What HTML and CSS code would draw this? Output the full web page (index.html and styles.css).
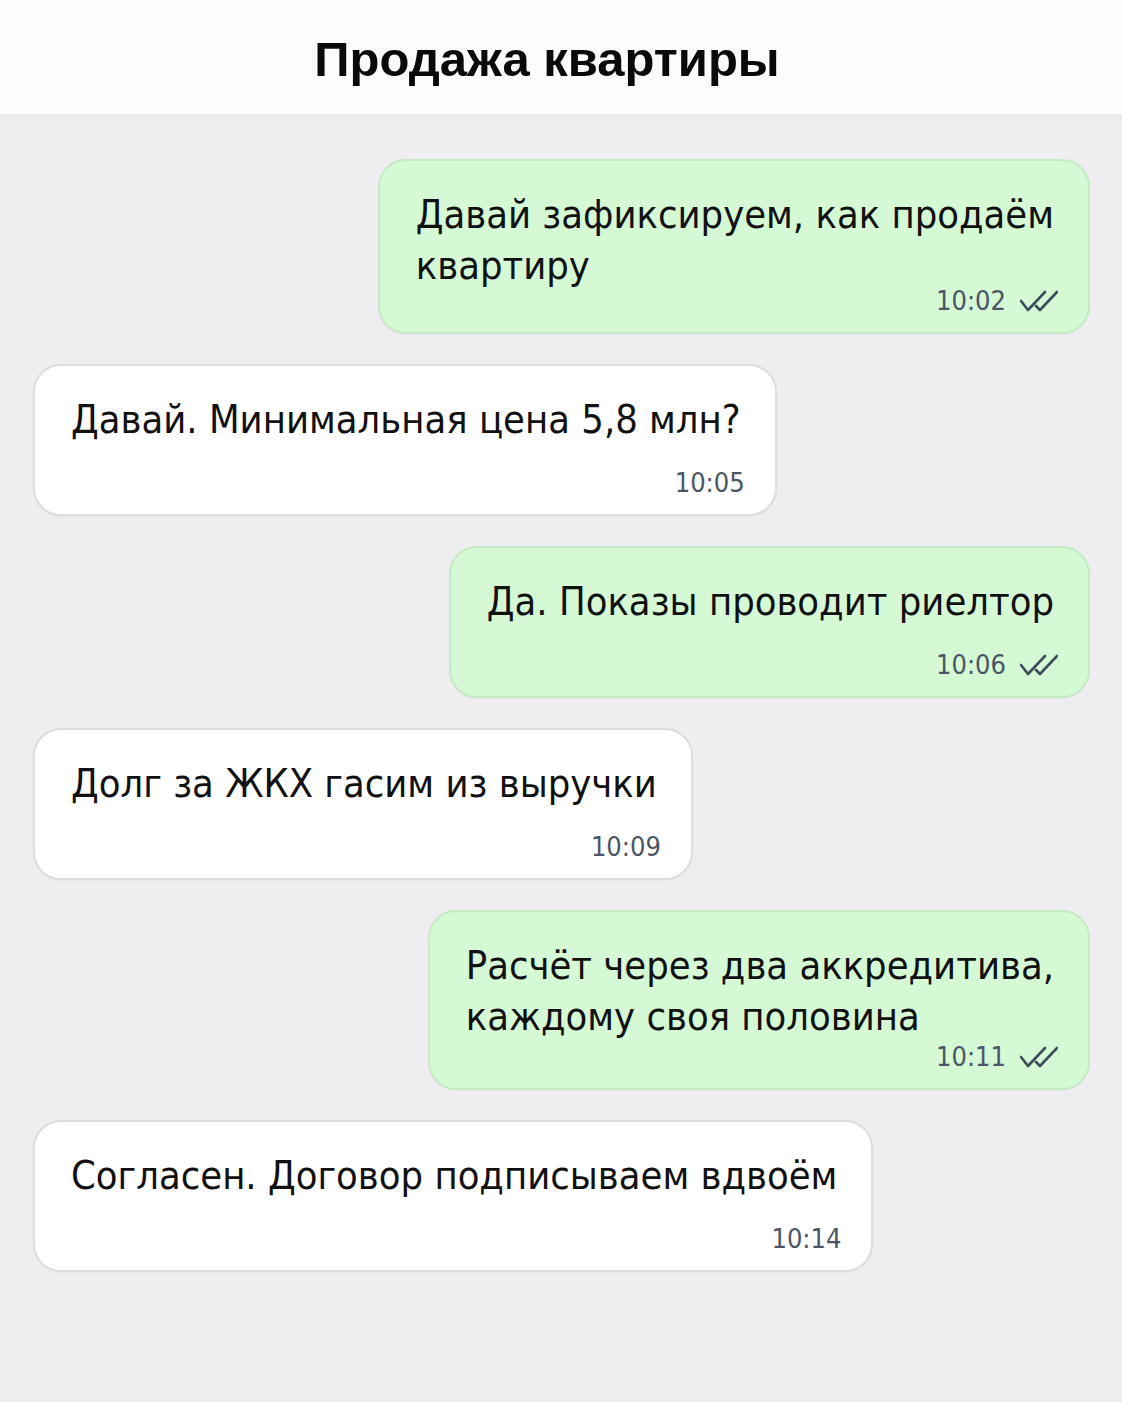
FILE: index.html
```html
<!DOCTYPE html>
<html lang="ru">
<head>
    <meta charset="UTF-8">
    <meta name="viewport" content="width=device-width, initial-scale=1.0">
    <title>Продажа квартиры</title>
    <link rel="stylesheet" href="styles.css">
</head>
<body>

<header class="chat-header">
    <h1>Продажа квартиры</h1>
</header>

<main class="chat">
    <div class="msg msg-out">
        <div class="bubble">
            <div class="text">Давай зафиксируем, как продаём<br>квартиру</div>
            <div class="meta meta-inline">
                <span class="time">10:02</span>
                <svg class="ticks" viewBox="0 0 38 22" width="38" height="22"><path d="M1 11 L8 20 L25 2 M16 16 L20 20 L37 2"/></svg>
            </div>
        </div>
    </div>

    <div class="msg msg-in">
        <div class="bubble">
            <div class="text">Давай. Минимальная цена 5,8 млн?</div>
            <div class="meta"><span class="time">10:05</span></div>
        </div>
    </div>

    <div class="msg msg-out">
        <div class="bubble">
            <div class="text">Да. Показы проводит риелтор</div>
            <div class="meta">
                <span class="time">10:06</span>
                <svg class="ticks" viewBox="0 0 38 22" width="38" height="22"><path d="M1 11 L8 20 L25 2 M16 16 L20 20 L37 2"/></svg>
            </div>
        </div>
    </div>

    <div class="msg msg-in">
        <div class="bubble">
            <div class="text">Долг за ЖКХ гасим из выручки</div>
            <div class="meta"><span class="time">10:09</span></div>
        </div>
    </div>

    <div class="msg msg-out">
        <div class="bubble">
            <div class="text">Расчёт через два аккредитива,<br>каждому своя половина</div>
            <div class="meta meta-inline meta-low">
                <span class="time">10:11</span>
                <svg class="ticks" viewBox="0 0 38 22" width="38" height="22"><path d="M1 11 L8 20 L25 2 M16 16 L20 20 L37 2"/></svg>
            </div>
        </div>
    </div>

    <div class="msg msg-in">
        <div class="bubble">
            <div class="text">Согласен. Договор подписываем вдвоём</div>
            <div class="meta"><span class="time">10:14</span></div>
        </div>
    </div>
</main>

</body>
</html>
```

FILE: styles.css
```css
/* Chat screenshot: title bar + message list */
body {
    margin: 0;
    min-height: 1402px;
    background: #eeeef0;
    font-family: "DejaVu Sans Condensed", "DejaVu Sans", sans-serif;
    font-stretch: condensed;
    color: #111111;
}

.chat-header {
    height: 114px;
    background: #fcfcfc;
    display: flex;
    align-items: center;
    justify-content: center;
}
.chat-header h1 {
    margin: 0 28px 0 0;
    padding-top: 4px;
    font-family: "Liberation Sans", Arial, sans-serif;
    font-stretch: normal;
    font-weight: bold;
    font-size: 49px;
    color: #0a0a0a;
}

.chat {
    display: flex;
    flex-direction: column;
    gap: 30px;
    padding: 45px 32px 0 33px;
}
.msg {
    display: flex;
}
.msg-out {
    justify-content: flex-end;
}
.msg-in {
    justify-content: flex-start;
}

.bubble {
    box-sizing: border-box;
    padding: 28px 34px 16px 36px;
    border-radius: 28px;
    border: 2px solid #dcdde0;
    background: #ffffff;
    box-shadow: 0 1px 2px rgba(0, 0, 0, 0.04);
}
.msg-out .bubble {
    background: #d6f9d5;
    border-color: #c6eac4;
}

.text {
    font-size: 39.5px;
    line-height: 51px;
    white-space: nowrap;
}

.meta {
    display: flex;
    align-items: center;
    justify-content: flex-end;
    gap: 14px;
    height: 30px;
    margin-top: 23px;
    margin-right: -4px;
}
/* time sits next to a short last line */
.meta-inline {
    margin-top: -5px;
}
.meta-low {
    margin-top: 0;
}
.time {
    font-size: 27px;
    line-height: 30px;
    color: #4a5665;
}
.ticks {
    fill: none;
    stroke: #3e4c5b;
    stroke-width: 2.6;
    stroke-linecap: round;
    stroke-linejoin: round;
}
```
